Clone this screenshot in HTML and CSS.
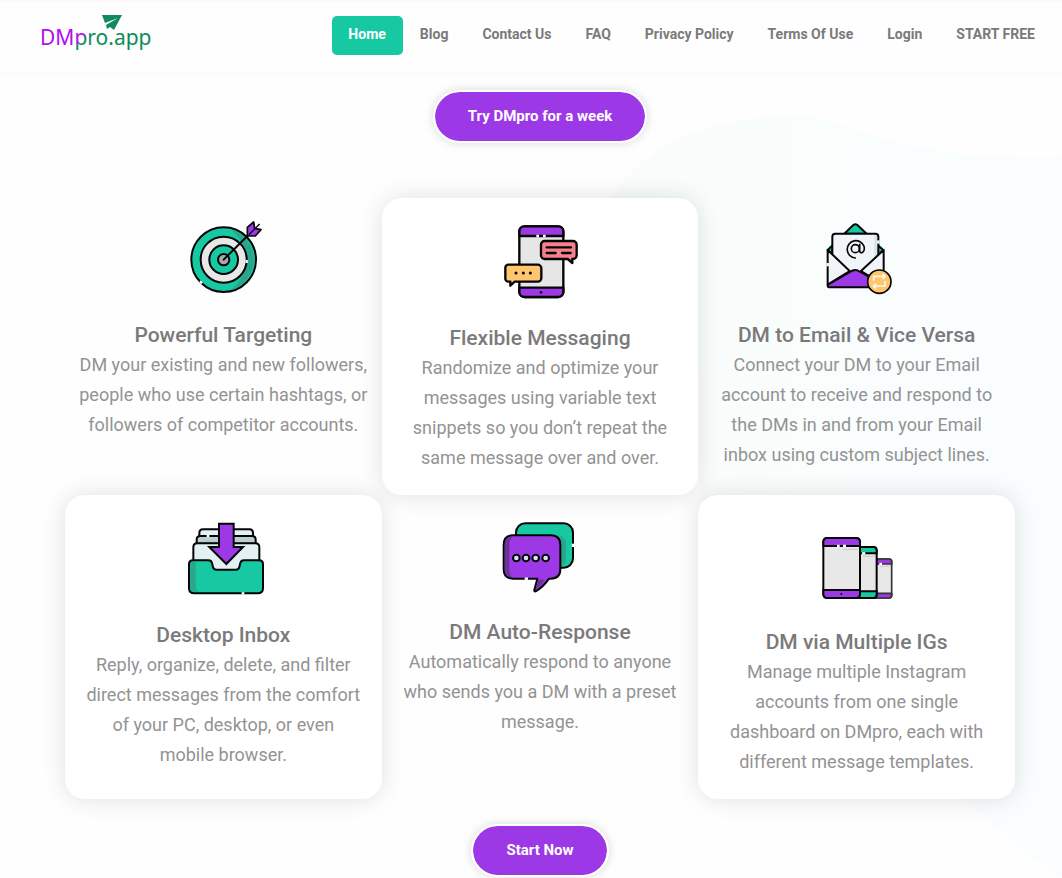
FILE: index.html
```
<!DOCTYPE html>
<html lang="en">
<head>
    <meta charset="UTF-8">
    <meta name="viewport" content="width=device-width, initial-scale=1.0">
    <title>DMpro.app</title>
    <link rel="stylesheet" href="styles.css">
</head>
<body>
<header class="site-header">
    <a class="logo" href="#" aria-label="DMpro.app">
        <svg width="130" height="44" viewBox="0 0 130 44">
            <defs>
                <linearGradient id="logo-fill" gradientUnits="userSpaceOnUse" x1="40" y1="20" x2="50" y2="30">
                    <stop offset="0.3" stop-color="#b010f0"/>
                    <stop offset="0.6" stop-color="#118a5e"/>
                </linearGradient>
            </defs>
            <text class="logo-text" x="0" y="33" fill="url(#logo-fill)">DMpro.app</text>
            <path d="M62 3h20l-8 15-4-3-3 2-1-4 12-7-13 5z" fill="#118a5e"/>
        </svg>
    </a>
    <nav class="menu">
        <a class="active" href="#">Home</a>
        <a href="#">Blog</a>
        <a href="#">Contact Us</a>
        <a href="#">FAQ</a>
        <a href="#">Privacy Policy</a>
        <a href="#">Terms Of Use</a>
        <a href="#">Login</a>
        <a href="#">START FREE</a>
    </nav>
</header>

<main class="features">
    <!-- background shape -->
    <svg class="blob" width="462" height="802" viewBox="0 0 462 802" aria-hidden="true">
        <defs>
            <linearGradient id="blob-fill" x1="0" y1="0" x2="1" y2="0">
                <stop offset="0" stop-color="#f8fdfb"/>
                <stop offset="1" stop-color="#fafdfe"/>
            </linearGradient>
        </defs>
        <path d="M0 140C30 80 90 40 200 40C240 40 300 87 462 81V802C420 776 390 745 350 712C270 640 200 560 100 420V300H0z" fill="url(#blob-fill)"/>
    </svg>

    <a class="btn" href="#">Try DMpro for a week</a>

    <div class="feature-grid">
        <!-- Powerful Targeting -->
        <div class="feature">
            <svg width="95" height="95" viewBox="-12 0 285 285" stroke="#050505" stroke-width="6" stroke-linecap="round" stroke-linejoin="round">
                <circle cx="131" cy="149" r="97" fill="#17c9a3"/>
                <path d="M150 57A95 95 0 0 1 150 241A110 110 0 0 0 196 149A110 110 0 0 0 150 57z" fill="#2ba58b" stroke="none"/>
                <circle cx="131" cy="149" r="69" fill="#e8e8e8"/>
                <circle cx="131" cy="149" r="43" fill="#17c9a3"/>
                <circle cx="131" cy="149" r="17" fill="#aaa"/>
                <path class="gap" d="M60 214l6 6M200 150v9"/>
                <path d="M131 149L220 60" fill="none"/>
                <path d="M202 78V52L221 36L224 55L243 59L226 78z" fill="#9c38e6" stroke-width="5"/>
                <path d="M208 73L238 43" fill="none" stroke-width="4"/>
            </svg>
            <h3>Powerful Targeting</h3>
            <p>DM your existing and new followers, people who use certain hashtags, or followers of competitor accounts.</p>
        </div>

        <!-- Flexible Messaging -->
        <div class="feature raised">
            <svg width="95" height="98" viewBox="-6 -15 285 294" stroke="#050505" stroke-width="7" stroke-linecap="round" stroke-linejoin="round">
                <rect x="76" y="34" width="132" height="212" rx="15" fill="#e6e6e6"/>
                <path d="M76 63V49a15 15 0 0 1 15-15h102a15 15 0 0 1 15 15v14zM76 218v13a15 15 0 0 0 15 15h102a15 15 0 0 0 15-15v-13z" fill="#9c38e6"/>
                <path class="gap" d="M127 63h8M147 63h8"/>
                <circle cx="141" cy="232" r="4" fill="#050505" stroke="none"/>
                <path d="M152 78h85a11 11 0 0 1 11 11v32a11 11 0 0 1-11 11h-2v12l-14-12h-69a11 11 0 0 1-11-11V89a11 11 0 0 1 11-11z" fill="#f5808b"/>
                <path d="M158 97h73M158 114h27M204 114h26" fill="none"/>
                <path d="M43 149h88a11 11 0 0 1 11 11v29a11 11 0 0 1-11 11H62l-13 12v-12h-6a9 9 0 0 1-9-9v-33a9 9 0 0 1 9-9z" fill="#ffc66f"/>
                <path d="M66 174h.1M88 174h.1M109 174h.1" stroke-width="9"/>
            </svg>
            <h3>Flexible Messaging</h3>
            <p>Randomize and optimize your messages using variable text snippets so you don’t repeat the same message over and over.</p>
        </div>

        <!-- DM to Email -->
        <div class="feature">
            <svg width="95" height="95" viewBox="-16 -15 285 285" stroke="#050505" stroke-width="6" stroke-linecap="round" stroke-linejoin="round">
                <path d="M90 56L117 30q6-5 12 0l28 26z" fill="#17c9a3"/>
                <path d="M54 91L40 105l14 16zM191 91l16 14-16 16z" fill="#17c9a3"/>
                <path d="M54 140V65q0-9 9-9h120q9 0 9 9v75l-69 60z" fill="#f1f4f9"/>
                <path d="M184 64v70" stroke="#dce2ec" stroke-width="8" fill="none"/>
                <path class="gap" d="M192 76v10"/>
                <path d="M40 105L106 168L40 209z" fill="#f1f4f9"/>
                <path d="M208 105L140 168L208 209z" fill="#f1f4f9"/>
                <path d="M40 210L112 168q11-6 21 0L208 210v7H44q-4 0-4-7z" fill="#9c38e6"/>
                <path class="gap" d="M40 144v10"/>
                <circle cx="123" cy="101" r="12" fill="none" stroke-width="5"/>
                <path d="M136 88v20q2 8 9 4q7-5 4-18A26 26 0 1 0 123 129" fill="none" stroke-width="5"/>
                <circle cx="195" cy="200" r="35" fill="#ffc66f" stroke-width="5"/>
                <path d="M178 196v-12h34m-6-6l7 6-7 6M212 200v13h-34m6-6l-7 6 7 6" stroke="#fff8e8" stroke-width="5" fill="none"/>
            </svg>
            <h3>DM to Email &amp; Vice Versa</h3>
            <p>Connect your DM to your Email account to receive and respond to the DMs in and from your Email inbox using custom subject lines.</p>
        </div>

        <!-- Desktop Inbox -->
        <div class="feature raised">
            <svg width="95" height="98" viewBox="-12 -24 285 294" stroke="#050505" stroke-width="6" stroke-linecap="round" stroke-linejoin="round">
                <path d="M58 64V54q0-11 11-11h139q11 0 11 11v10z" fill="#e3f1f3"/>
                <path d="M50 86V74q0-11 11-11h155q11 0 11 11v12z" fill="#b9d0d3"/>
                <path d="M40 140V97q0-12 12-12h174q12 0 12 12v43l-50 40H90z" fill="#e3f1f3"/>
                <path class="gap" d="M80 63h8"/>
                <path d="M27 148q0-12 12-12h46q9 0 11 8l3 12q2 8 10 8h59q8 0 10-8l3-12q2-8 11-8h45q12 0 12 12v71q0 16-16 16H43q-16 0-16-16z" fill="#17c9a3"/>
                <path d="M31 148q0-8 8-8h8v72q0 14 10 19H43q-12 0-12-12z" fill="#2ba58b" stroke="none"/>
                <path class="gap" d="M185 235h8"/>
                <path d="M117 26h44v70h28l-50 51-51-51h29z" fill="#9c38e6" stroke-linejoin="miter"/>
            </svg>
            <h3>Desktop Inbox</h3>
            <p>Reply, organize, delete, and filter direct messages from the comfort of your PC, desktop, or even mobile browser.</p>
        </div>

        <!-- DM Auto-Response -->
        <div class="feature">
            <svg width="95" height="95" viewBox="-6 -24 285 285" stroke="#050505" stroke-width="6" stroke-linecap="round" stroke-linejoin="round">
                <rect x="66" y="25" width="171" height="133" rx="28" fill="#17c9a3"/>
                <path d="M199 62q17 8 17 26v40q0 18-14 26z" fill="#2ba58b" stroke="none"/>
                <path class="gap" d="M237 86v10"/>
                <path d="M57 61h113q29 0 29 29v73q0 28-29 28h-5q-18 26-40 38q-5 1-4-4l9-34H57q-28 0-28-28V90q0-29 28-29z" fill="#9c38e6"/>
                <path d="M57 65H54q-22 3-22 25v73q0 22 24 25q-10-8-10-25V88q0-16 11-23zM133 194h18q-11 20-26 29z" fill="#6a3296" stroke="none"/>
                <path class="gap" d="M92 191h10"/>
                <g fill="#d5e2fa">
                    <circle cx="67" cy="129" r="10"/>
                    <circle cx="96" cy="129" r="10"/>
                    <circle cx="125" cy="129" r="10"/>
                    <circle cx="155" cy="129" r="10"/>
                </g>
            </svg>
            <h3>DM Auto-Response</h3>
            <p>Automatically respond to anyone who sends you a DM with a preset message.</p>
        </div>

        <!-- DM via Multiple IGs -->
        <div class="feature raised">
            <svg width="95" height="105" viewBox="-16 -54 285 315" stroke="#050505" stroke-width="6" stroke-linecap="round" stroke-linejoin="round">
                <g stroke="#333" stroke-width="5">
                    <rect x="165" y="102" width="67" height="117" rx="8" fill="#e8e8e8"/>
                    <path d="M165 117v-15h59q8 0 8 8v7zM165 205v14h59q8 0 8-8v-6z" fill="#9c38e6"/>
                    <path class="gap" d="M195 117h8"/>
                </g>
                <rect x="110" y="66" width="77" height="153" rx="10" fill="#e8e8e8"/>
                <path d="M120 85V66h57q10 0 10 10v9zM120 199v20h57q10 0 10-10v-10z" fill="#17c9a3"/>
                <path class="gap" d="M143 85h10"/>
                <rect x="27" y="39" width="110" height="180" rx="12" fill="#e8e8e8"/>
                <path d="M27 63V51q0-12 12-12h86q12 0 12 12v12zM27 195v12q0 12 12 12h86q12 0 12-12v-12z" fill="#9c38e6"/>
                <path class="gap" d="M68 63h8M86 63h9"/>
                <circle cx="81" cy="207" r="3" fill="#050505" stroke="none"/>
                <path d="M88 73h42M146 94h35M198 124h28" stroke="#bbb" stroke-width="2"/>
            </svg>
            <h3>DM via Multiple IGs</h3>
            <p>Manage multiple Instagram accounts from one single dashboard on DMpro, each with different message templates.</p>
        </div>
    </div>

    <a class="btn" href="#">Start Now</a>
</main>
</body>
</html>
```
FILE: styles.css
```
* {
    margin: 0;
    padding: 0;
    box-sizing: border-box;
}

body {
    font-family: Roboto, Arial, sans-serif;
    font-size: 18px;
    line-height: 30px;
    background-color: #fefefe;
    color: #939393;
}

a {
    text-decoration: none;
}

.site-header {
    display: flex;
    justify-content: space-between;
    align-items: flex-start;
    padding: 14px 10px 16px 40px;
    min-height: 76px;
    background: #fefefe;
    border-top: 2px solid #fbfbfb;
    border-bottom: 4px solid #fcfcfc;
}

.logo {
    margin-top: -4px;
    line-height: 0;
}

.logo-text {
    font-family: "Noto Sans", "Open Sans", sans-serif;
    font-size: 21px;
}

.menu {
    display: flex;
    flex-wrap: wrap;
    gap: 1px;
}

.menu a {
    padding: 3px 17px 6px 16px;
    font-size: 14px;
    font-weight: 700;
    color: #7a7a7a;
    border-radius: 5px;
}

.menu a.active {
    background: #17c9a3;
    color: #fff;
}

.features {
    position: relative;
    display: flex;
    flex-direction: column;
    align-items: center;
    padding: 14px 47px 1px 65px;
    overflow: hidden;
}

.blob {
    position: absolute;
    top: 0;
    right: 0;
}

.btn {
    position: relative;
    padding: 9px 33px 10px;
    font-size: 15px;
    font-weight: 700;
    color: #fff;
    background: #9c38e6;
    background-clip: padding-box;
    border: 2px solid #fff;
    border-radius: 30px;
    box-shadow: 0 0 10px rgba(0, 0, 0, 0.15);
}

.feature-grid {
    position: relative;
    display: grid;
    grid-template-columns: repeat(3, 1fr);
    width: 100%;
    margin: 55px 0 25px;
}

.feature {
    padding: 12px 12px 22px;
    text-align: center;
    border-radius: 20px;
}

.feature.raised {
    padding: 12px 20px 22px;
    background: #fff;
    box-shadow: 0 0 25px rgba(0, 0, 0, 0.12);
}

.feature svg {
    display: block;
    margin: 0 auto 16px;
}

.feature h3 {
    font-size: 21px;
    font-weight: 500;
    line-height: 29px;
    color: #7a7a7a;
}

/* small breaks in the icon outlines */
.gap {
    fill: none;
    stroke: #fff;
    stroke-width: 7px;
    stroke-linecap: butt;
}

@media (max-width: 900px) {
    .feature-grid {
        grid-template-columns: 1fr;
    }
}
```
